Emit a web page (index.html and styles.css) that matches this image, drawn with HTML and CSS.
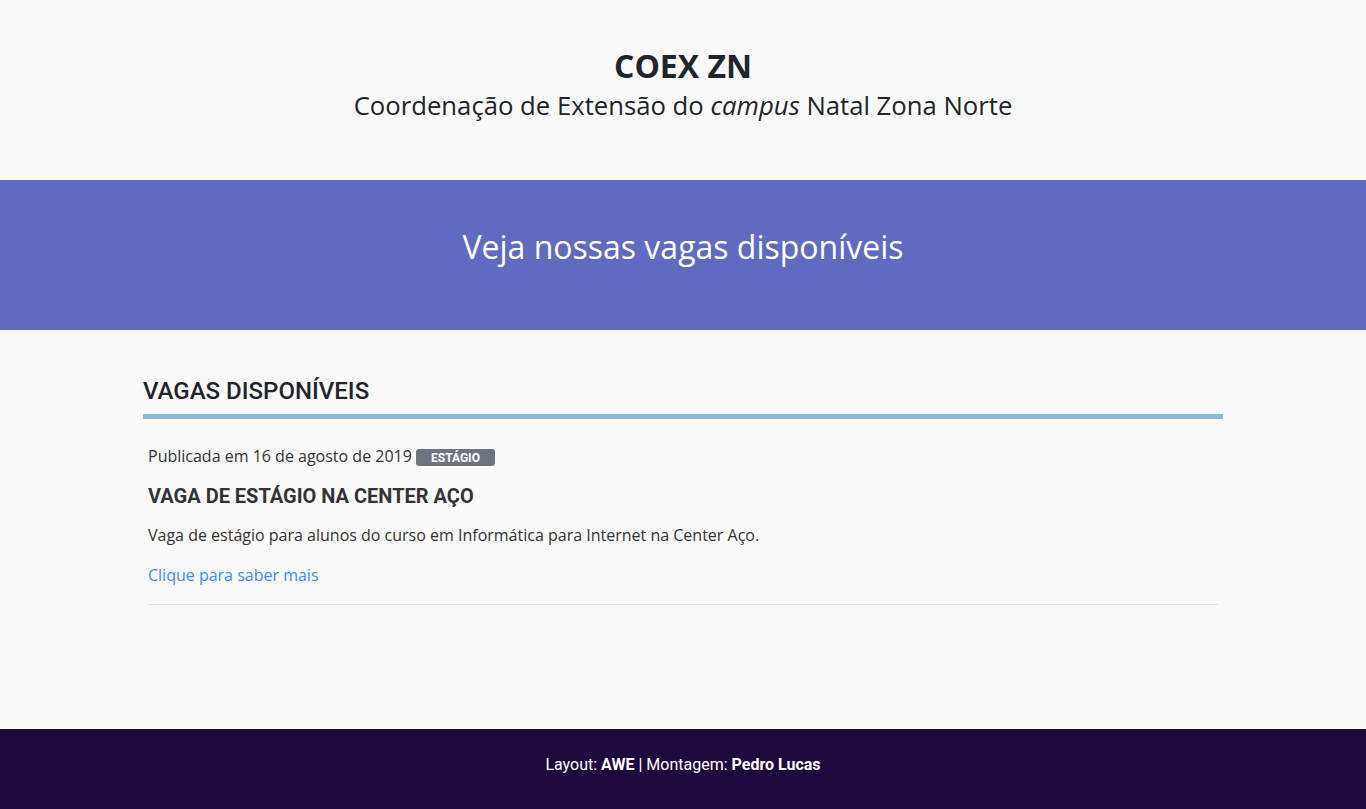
FILE: index.html
```html
<!DOCTYPE html>
<html lang="pt-br">
<head>
<meta charset="utf-8">
<title>COEX ZN</title>
<link rel="stylesheet" href="styles.css">
</head>
<body>
<header class="site-header">
  <h1 class="brand">COEX ZN</h1>
  <p class="tagline">Coordenação de Extensão do <em>campus</em> Natal Zona Norte</p>
</header>
<section class="hero">
  <h2 class="hero-title">Veja nossas vagas disponíveis</h2>
</section>
<main class="content">
  <div class="container">
    <h3 class="section-title">VAGAS DISPONÍVEIS</h3>
    <article class="job">
      <p class="job-meta">Publicada em 16 de agosto de 2019 <span class="badge">ESTÁGIO</span></p>
      <h4 class="job-title">VAGA DE ESTÁGIO NA CENTER AÇO</h4>
      <p class="job-desc">Vaga de estágio para alunos do curso em Informática para Internet na Center Aço.</p>
      <a class="job-link" href="#">Clique para saber mais</a>
    </article>
  </div>
</main>
<footer class="site-footer">
  <p>Layout: <strong>AWE</strong> | Montagem: <strong>Pedro Lucas</strong></p>
</footer>
</body>
</html>
```
FILE: styles.css
```css
* { box-sizing: border-box; }
html, body { margin: 0; padding: 0; }
body {
  background: #fafafa;
  color: #212529;
  font-family: "Open Sans", "Liberation Sans", sans-serif;
  min-height: 809px;
  display: flex;
  flex-direction: column;
}
.site-header {
  height: 180px;
  padding-top: 46px;
  text-align: center;
}
.brand {
  margin: 0;
  font-family: "Open Sans", sans-serif;
  font-weight: 700;
  font-size: 32px;
  line-height: 40px;
  color: #212529;
}
.tagline {
  margin: 0;
  font-size: 25.7px;
  line-height: 40px;
  font-weight: 400;
  color: #212529;
}
.tagline em { font-style: italic; }
.hero {
  background: #5e6bc0;
  height: 150px;
  display: flex;
  align-items: center;
  justify-content: center;
  padding-bottom: 16px;
}
.hero-title {
  margin: 0;
  color: #fff;
  font-weight: 400;
  font-size: 32px;
  line-height: 40px;
}
.content { flex: 1; }
.container {
  width: 1080px;
  margin: 0 auto;
  padding-top: 46px;
}
.section-title {
  margin: 0;
  font-family: Roboto, sans-serif;
  font-weight: 500;
  font-size: 24px;
  line-height: 30px;
  color: #212529;
  padding-bottom: 8px;
  border-bottom: 5px solid #91b9d3;
}
.job {
  margin: 0 5px;
  padding-top: 26px;
  padding-bottom: 17px;
  border-bottom: 1px solid #dfdfdf;
}
.job-meta {
  margin: 0;
  font-size: 16px;
  line-height: 22px;
  color: #333;
}
.badge {
  display: inline-block;
  background: #6c757d;
  color: #fff;
  font-family: Roboto, sans-serif;
  font-weight: 700;
  font-size: 12px;
  line-height: 12px;
  padding: 3px 15px 2px;
  border-radius: 3px;
  vertical-align: 0;
}
.job-title {
  margin: 17px 0 0;
  font-family: Roboto, sans-serif;
  font-weight: 700;
  font-size: 20px;
  line-height: 24px;
  color: #333;
}
.job-desc {
  margin: 15px 0 0;
  font-size: 16px;
  line-height: 24px;
  color: #333;
}
.job-link {
  display: inline-block;
  margin-top: 16px;
  font-size: 16px;
  line-height: 24px;
  color: #3d8bfd;
  text-decoration: none;
}
.site-footer {
  background: #1d0a3c;
  height: 80px;
  display: flex;
  align-items: center;
  justify-content: center;
  padding-bottom: 10px;
}
.site-footer p {
  margin: 0;
  color: #fff;
  font-family: Roboto, sans-serif;
  font-size: 16px;
}
.site-footer strong { font-weight: 700; }
```
